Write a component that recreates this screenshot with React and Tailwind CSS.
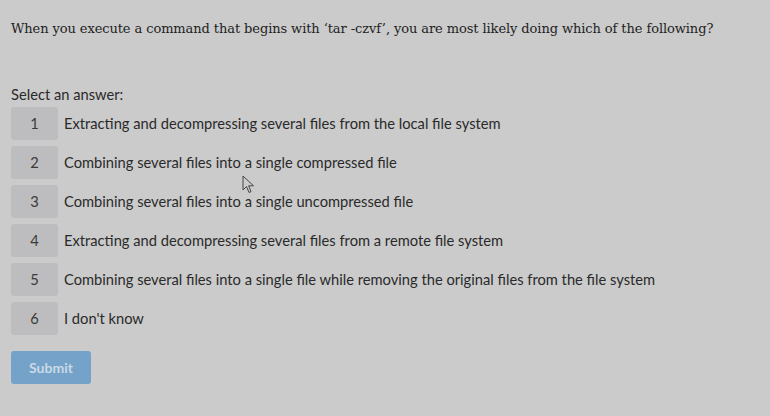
export default function App() {
  const answers = [
    "Extracting and decompressing several files from the local file system",
    "Combining several files into a single compressed file",
    "Combining several files into a single uncompressed file",
    "Extracting and decompressing several files from a remote file system",
    "Combining several files into a single file while removing the original files from the file system",
    "I don't know",
  ];
  return (
    <div className="relative w-[770px] h-[416px] bg-[#cbcbcb] overflow-hidden">
      <div className="pl-[11px] pt-[19px]">
        <p className="font-['DejaVu_Serif',serif] text-[13px] leading-[20px] text-[#222] tracking-[-0.09px] whitespace-nowrap">
          When you execute a command that begins with ‘tar -czvf’, you are most likely doing which of the following?
        </p>
        <p className="mt-[46px] font-['Lato',sans-serif] text-[14.7px] leading-[18px] text-[#2a2a2a]">Select an answer:</p>
        <div className="mt-[4px] flex flex-col gap-[6px]">
          {answers.map((a, i) => (
            <div key={i} className="flex items-center gap-[6px] font-['Lato',sans-serif] text-[14.7px] text-[#2a2a2a]">
              <div className="w-[47px] h-[33px] rounded-[3px] bg-[#bdbdbf] flex items-center justify-center text-[#3a3a3a]">
                {i + 1}
              </div>
              <span>{a}</span>
            </div>
          ))}
        </div>
        <button className="mt-[16px] w-[80px] h-[33px] rounded-[3px] bg-[#74a2c8] text-[#c9d9e6] font-['Lato',sans-serif] font-bold text-[14px]">
          Submit
        </button>
      </div>
      <svg className="absolute left-[242px] top-[175px]" width="14" height="20" viewBox="0 0 14 20">
        <path d="M1 1 L1 15 L4.5 11.5 L7 17.5 L9 16.6 L6.6 10.8 L11.5 10.8 Z" fill="#cbcbcb" stroke="#444" strokeWidth="1" strokeLinejoin="round" />
      </svg>
    </div>
  );
}
